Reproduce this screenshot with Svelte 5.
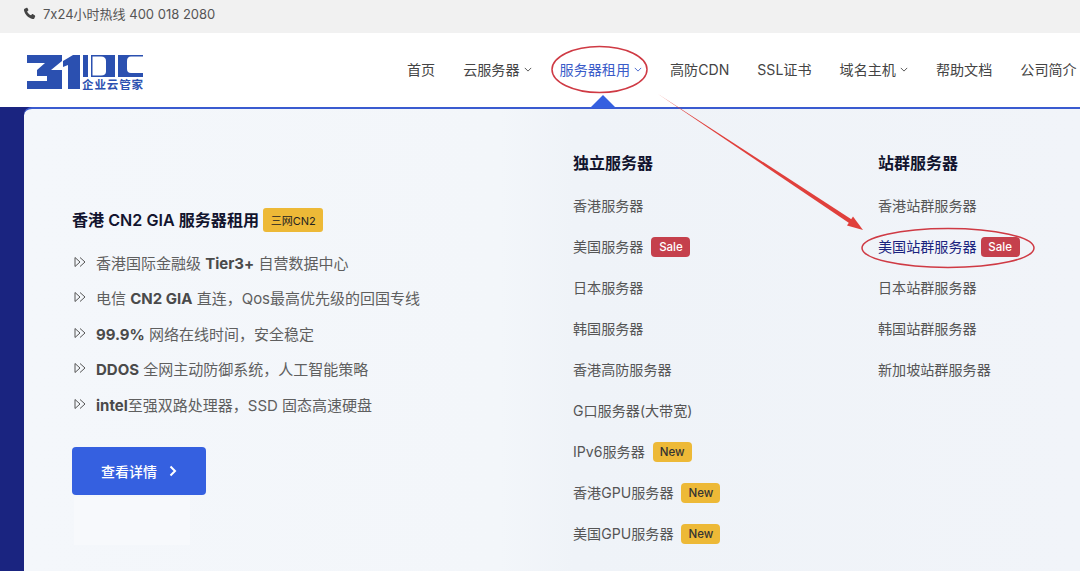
<script>
  const nav = [
    { t: '首页' },
    { t: '云服务器', c: true },
    { t: '服务器租用', c: true, active: true },
    { t: '高防CDN' },
    { t: 'SSL证书' },
    { t: '域名主机', c: true },
    { t: '帮助文档' },
    { t: '公司简介' }
  ];
  const features = [
    [['香港国际金融级 ', 0], ['Tier3+', 1], [' 自营数据中心', 0]],
    [['电信 ', 0], ['CN2 GIA', 1], [' 直连，Qos最高优先级的回国专线', 0]],
    [['99.9%', 1], [' 网络在线时间，安全稳定', 0]],
    [['DDOS', 1], [' 全网主动防御系统，人工智能策略', 0]],
    [['intel', 1], ['至强双路处理器，SSD 固态高速硬盘', 0]]
  ];
  const col1 = [
    { t: '香港服务器' },
    { t: '美国服务器', b: 'Sale' },
    { t: '日本服务器' },
    { t: '韩国服务器' },
    { t: '香港高防服务器' },
    { t: 'G口服务器(大带宽)' },
    { t: 'IPv6服务器', b: 'New' },
    { t: '香港GPU服务器', b: 'New' },
    { t: '美国GPU服务器', b: 'New' }
  ];
  const col2 = [
    { t: '香港站群服务器' },
    { t: '美国站群服务器', b: 'Sale', hl: true },
    { t: '日本站群服务器' },
    { t: '韩国站群服务器' },
    { t: '新加坡站群服务器' }
  ];
</script>

<div class="page">
  <div class="topbar">
    <svg class="phone" viewBox="0 0 24 24" width="13" height="13"><path d="M6.6 1.6 3 3.2C1.9 3.8 1.6 5 1.9 6.4c1.8 7.6 8 13.9 15.700 15.700 1.400.3 2.600 0 3.200-1.100l1.600-3.600c.3-.6.1-1.200-.4-1.600l-4-2.700c-.5-.3-1.100-.3-1.500.2l-1.700 2c-3.100-1.500-5.700-4.100-7.200-7.200l2-1.700c.5-.4.500-1 .2-1.500L8.200 2c-.4-.5-1-.7-1.600-.4Z" fill="#444"/></svg>
    <span>7x24小时热线 400 018 2080</span>
  </div>

  <header class="header">
    <div class="logo">
      <svg viewBox="0 0 116 35" width="116" height="35">
        <g fill="#2b50b0">
          <path d="M0 0h35v6L24 15h11v19H0v-8h20v-5H10v-6l8-7H0Z"/>
          <path d="M36 6 46 0h7v34H41V10l-5 2Z"/>
          <path d="M56 0h5v22h-5Z"/>
          <path fill-rule="evenodd" d="M64 0h24v22H64Zm1.500 1.500v19H74q5 0 5-4V6q0-4.500-5-4.500Z"/>
          <path d="M91 0h25v1.500h-12q-4 0-4 4.500v8q0 4 4 4h12v4H91Z"/>
        </g>
        <text x="55" y="33.500" class="logo-sub" textLength="61">企业云管家</text>
      </svg>
    </div>
    <nav class="nav">
      {#each nav as n}
        <span class="nav-item" class:active={n.active}>
          {n.t}
          {#if n.c}
            <svg class="chev" viewBox="0 0 10 6" width="8" height="5"><path d="M1 1l4 4 4-4" fill="none" stroke="currentColor" stroke-width="1.100"/></svg>
          {/if}
        </span>
      {/each}
    </nav>
  </header>

  <main class="stage">
    <div class="panel">
      <div class="ghost"></div>
      <section class="intro">
        <h2 class="intro-title"><span class="intro-text">香港 CN2 GIA 服务器租用</span><span class="tag">三网CN2</span></h2>
        <ul class="features">
          {#each features as f}
            <li>
              <svg class="dbl" viewBox="0 0 12 12" width="12" height="12"><path d="M1 1.500 6 6 1 10.500ZM6 1.500 11 6l-5 4.500" fill="none" stroke="#555" stroke-width="1"/></svg>
              <span>{#each f as [s, b]}{#if b}<b>{s}</b>{:else}{s}{/if}{/each}</span>
            </li>
          {/each}
        </ul>
        <button class="cta">查看详情
          <svg viewBox="0 0 8 12" width="8" height="12"><path d="M1.500 1.500 6 6l-4.500 4.500" fill="none" stroke="#fff" stroke-width="2"/></svg>
        </button>
      </section>

      <section class="col col-a">
        <h3>独立服务器</h3>
        {#each col1 as i}
          <div class="link"><span>{i.t}</span>{#if i.b}<span class="pill {i.b === 'Sale' ? 'sale' : 'new'}">{i.b}</span>{/if}</div>
        {/each}
      </section>

      <section class="col col-b">
        <h3>站群服务器</h3>
        {#each col2 as i}
          <div class="link" class:hl={i.hl}><span>{i.t}</span>{#if i.b}<span class="pill sale">{i.b}</span>{/if}</div>
        {/each}
      </section>
    </div>
    <div class="caret"></div>
  </main>

  <svg class="marks" viewBox="0 0 1080 571" width="1080" height="571">
    <ellipse cx="599.500" cy="69.500" rx="47.500" ry="23" fill="none" stroke="#cf3a44" stroke-width="1.500"/>
    <ellipse cx="948" cy="248" rx="86" ry="19.500" fill="none" stroke="#cf3a44" stroke-width="1.500"/>
    <path d="M658 94 852.500 220 850.500 224Z" fill="#e0403c"/>
    <path d="M863 230 847 225.500 853 216.500Z" fill="#e0403c"/>
  </svg>
</div>

<style>
  :global(body) { margin: 0; background: #fff; }
  .page {
    position: relative;
    width: 1080px;
    height: 571px;
    overflow: hidden;
    font-family: Inter, "Noto Sans CJK SC", sans-serif;
    font-feature-settings: "calt" 0;
    color: #555;
  }
  .topbar {
    height: 33px;
    box-sizing: border-box;
    padding: 0 0 6px 23px;
    background: #f1f1f1;
    display: flex;
    align-items: center;
    gap: 7px;
    font-size: 13px;
    color: #555;
  }
  .phone { flex: none; }
  .header {
    height: 74px;
    background: #fff;
    display: flex;
    align-items: center;
    justify-content: space-between;
    padding-left: 27px;
  }
  .logo { display: flex; margin-top: 5px; }
  .logo-sub { font-size: 11.500px; font-weight: 700; fill: #2b50b0; }
  .nav {
    display: flex;
    gap: 28px;
    width: 673px;
    flex: none;
    white-space: nowrap;
    margin-top: -3px;
  }
  .nav-item {
    display: inline-flex;
    align-items: center;
    gap: 4px;
    font-size: 14.100px;
    color: #444;
  }
  .nav-item.active { color: #3a5cc9; }
  .chev { flex: none; margin-top: 2px; }
  .stage {
    position: relative;
    height: 464px;
    background: #1a2480;
    padding-left: 24px;
  }
  .caret {
    position: absolute;
    left: 590px;
    top: -12px;
    width: 0;
    height: 0;
    border-left: 13px solid transparent;
    border-right: 13px solid transparent;
    border-bottom: 13px solid #3560e0;
  }
  .panel {
    position: relative;
    box-sizing: border-box;
    height: 100%;
    width: 1056px;
    border-top: 2px solid #3a5bd0;
    border-top-left-radius: 8px;
    background: linear-gradient(90deg, #f4f7fb 0%, #f3f6fa 45%, #eff3f8 52%, #f1f4f9 100%);
    display: grid;
    grid-template-columns: 549px 305px 1fr;
  }
  .ghost {
    position: absolute;
    left: 50px;
    top: 388px;
    width: 116px;
    height: 48px;
    background: #f7f9fc;
  }
  .intro {
    position: relative;
    padding: 99px 0 0 48px;
  }
  .intro-title {
    margin: 0;
    display: flex;
    align-items: center;
    gap: 4px;
    height: 24px;
    font-size: 16.100px;
    font-weight: 600;
    color: #12142e;
    white-space: pre;
  }
  .intro-text { margin-top: -3px; }
  .tag {
    display: inline-flex;
    align-items: center;
    justify-content: center;
    width: 60px;
    height: 24px;
    background: #edb937;
    border-radius: 3px;
    font-size: 11px;
    font-weight: 400;
    color: #222;
  }
  .features {
    list-style: none;
    margin: 13px 0 0;
    padding: 0;
  }
  .features li {
    display: flex;
    align-items: center;
    gap: 10px;
    height: 35.500px;
    font-size: 15px;
    color: #5f5f5f;
    white-space: pre;
    padding-left: 2px;
  }
  .features li > span { margin-top: -1px; }
  .dbl { flex: none; margin-top: -2px; }
  .features b { font-weight: 700; color: #4a4a4a; }
  .cta {
    margin-top: 24px;
    width: 134px;
    height: 48px;
    border: 0;
    border-radius: 4px;
    background: #3560e0;
    color: #fff;
    font: inherit;
    font-size: 14px;
    font-weight: 500;
    display: flex;
    align-items: center;
    justify-content: center;
    gap: 12px;
  }
  .col { padding-top: 42px; position: relative; }
  .col h3 {
    margin: 0 0 9px;
    height: 24px;
    line-height: 24px;
    font-size: 16px;
    font-weight: 600;
    color: #12142e;
  }
  .link {
    height: 41px;
    display: flex;
    align-items: center;
    gap: 8px;
    font-size: 14.100px;
    color: #555;
    white-space: nowrap;
  }
  .link.hl { color: #1a237e; gap: 4px; }
  .pill {
    display: inline-flex;
    align-items: center;
    justify-content: center;
    width: 39px;
    height: 20px;
    margin-top: 3px;
    border-radius: 4px;
    font-size: 11.500px;
    font-weight: 500;
  }
  .sale { background: #c5404c; color: #fff; }
  .new { background: #edb937; color: #333; }
  .marks {
    position: absolute;
    left: 0;
    top: 0;
    pointer-events: none;
  }
</style>
